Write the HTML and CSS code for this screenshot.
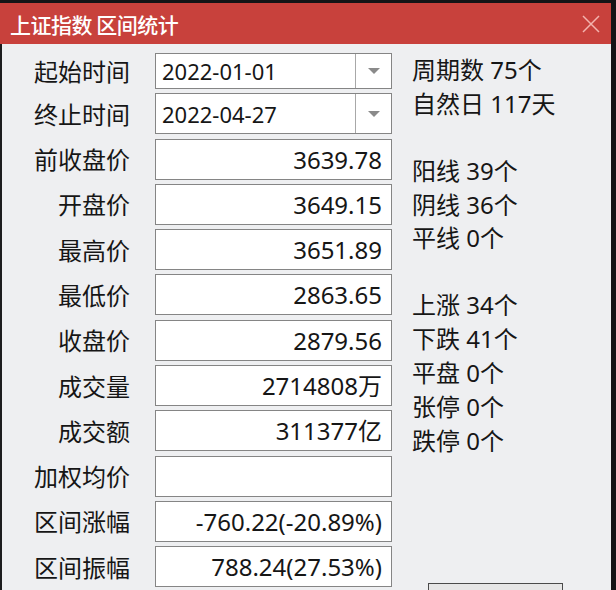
FILE: index.html
```html
<!DOCTYPE html>
<html lang="zh-CN">
<head>
<meta charset="UTF-8">
<title>上证指数 区间统计</title>
<link rel="stylesheet" href="styles.css">
</head>
<body>
<div class="window">
	<div class="titlebar">
		<span class="title">上证指数 区间统计</span>
		<svg class="close" width="18" height="18" viewBox="0 0 18 18"><path d="M1 1L17 17M17 1L1 17" stroke="#f3b4ae" stroke-width="1.5" fill="none"/></svg>
	</div>
	<div class="content">
		<div class="form">
			<span class="label">起始时间</span>
			<div class="combo"><span class="date">2022-01-01</span><span class="drop"><i class="arrow"></i></span></div>
			<span class="label">终止时间</span>
			<div class="combo"><span class="date">2022-04-27</span><span class="drop"><i class="arrow"></i></span></div>
			<span class="label">前收盘价</span>
			<div class="field">3639.78</div>
			<span class="label">开盘价</span>
			<div class="field">3649.15</div>
			<span class="label">最高价</span>
			<div class="field">3651.89</div>
			<span class="label">最低价</span>
			<div class="field">2863.65</div>
			<span class="label">收盘价</span>
			<div class="field">2879.56</div>
			<span class="label">成交量</span>
			<div class="field">2714808万</div>
			<span class="label">成交额</span>
			<div class="field">311377亿</div>
			<span class="label">加权均价</span>
			<div class="field"></div>
			<span class="label">区间涨幅</span>
			<div class="field">-760.22(-20.89%)</div>
			<span class="label">区间振幅</span>
			<div class="field">788.24(27.53%)</div>
		</div>
		<div class="stats">
			<p>周期数 75个</p>
			<p>自然日 117天</p>
			<p class="blank"></p>
			<p>阳线 39个</p>
			<p>阴线 36个</p>
			<p>平线 0个</p>
			<p class="blank"></p>
			<p>上涨 34个</p>
			<p>下跌 41个</p>
			<p>平盘 0个</p>
			<p>张停 0个</p>
			<p>跌停 0个</p>
			<div class="button"></div>
		</div>
	</div>
</div>
</body>
</html>
```
FILE: styles.css
```css
html, body {
	margin: 0;
	background: #141416;
	overflow: hidden;
}
body {
	font-family: "Noto Sans", "Noto Sans CJK SC", sans-serif;
	color: #161616;
}
.window {
	width: 611px;
	margin-top: 3px;
	background: #eeeff1;
}
.titlebar {
	height: 41px;
	background: #c8413c;
	display: flex;
	align-items: center;
	justify-content: space-between;
	padding: 0 11px 0 10px;
}
.title {
	color: #fff;
	font-family: "Noto Sans CJK SC", sans-serif;
	font-size: 21px;
	font-weight: 500;
	letter-spacing: -0.5px;
}
.content {
	display: flex;
	border-left: 2px solid #1c1c1e;
	padding-top: 9px;
	height: 560px;
}
.form {
	display: grid;
	grid-template-columns: 128px 237px;
	grid-template-rows: 36px;
	grid-auto-rows: 41px;
	column-gap: 25px;
	row-gap: 4.3px;
	align-content: start;
}
.label {
	font-family: "Noto Sans CJK SC", sans-serif;
	font-size: 24px;
	text-align: right;
	align-self: center;
	line-height: 1;
}
.field, .combo {
	box-sizing: border-box;
	background: #fff;
	border: 1px solid #858585;
}
.field {
	font-size: 24px;
	line-height: 39px;
	text-align: right;
	padding-right: 9px;
}
.combo {
	display: flex;
	align-items: stretch;
}
.date {
	flex: 1;
	font-size: 22px;
	padding-left: 6px;
	display: flex;
	align-items: center;
}
.drop {
	width: 35px;
	border-left: 1px solid #a8a8a8;
	display: flex;
	align-items: center;
	justify-content: center;
}
.arrow {
	width: 0;
	height: 0;
	border-left: 6px solid transparent;
	border-right: 6px solid transparent;
	border-top: 6px solid #8a8a8a;
}
.stats {
	margin-left: 20px;
	display: flex;
	flex-direction: column;
}
.stats p {
	margin: 0;
	font-size: 24px;
	line-height: 33.8px;
	height: 33.8px;
	white-space: nowrap;
}
.button {
	margin-left: 16px;
	margin-top: 126px;
	width: 135px;
	height: 30px;
	box-sizing: border-box;
	border: 1px solid #4a4a4a;
	background: #e6e6e6;
}
```
